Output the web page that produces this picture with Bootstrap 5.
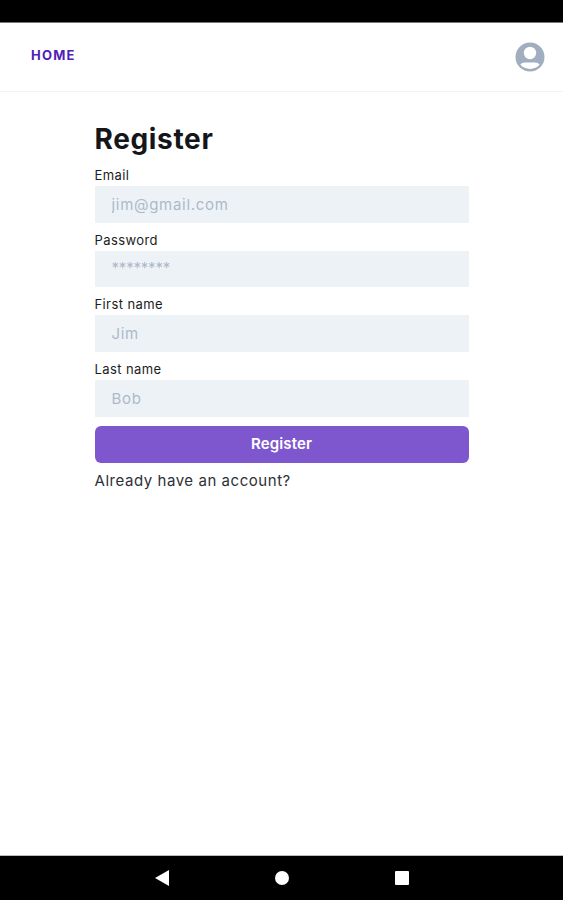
<!DOCTYPE html>
<html lang="en">
<head>
  <meta charset="UTF-8" />
  <meta name="viewport" content="width=device-width, initial-scale=1.0"/>
  <title>Register</title>
  <link href="https://cdn.jsdelivr.net/npm/bootstrap@5.3.0/dist/css/bootstrap.min.css" rel="stylesheet"/>
  <style>
    body {
      background: #fff;
      font-family: Inter, "Liberation Sans", sans-serif;
      height: 900px;
      overflow: hidden;
    }
    .status-strip { background: #000; border-bottom: 1px solid #777; height: 23px; }
    .top-bar { height: 69px; border-bottom: 1px solid #f1f3f5; padding: 0 18px 0 31px; }
    .home-link { color: #5021b8; font-size: 13px; font-weight: 700; text-decoration: none; letter-spacing: 1.2px; margin-bottom: 3px; }
    .page-main { height: 763px; }
    .reg-form { width: 374px; margin: 0 auto; padding-top: 28px; }
    .reg-title { font-size: 28px; font-weight: 700; color: #14161a; line-height: 38px; letter-spacing: .65px; margin: 0 0 8px; }
    .reg-label { display: block; font-size: 13px; color: #1a1d21; line-height: 18px; letter-spacing: .4px; margin: 0 0 2px; }
    .reg-input, .reg-input:focus {
      display: block;
      width: 100%;
      height: 36.7px;
      border: 0;
      border-radius: 0;
      background: #edf2f7;
      box-shadow: none;
      padding: 0 17px;
      font-size: 15px;
      letter-spacing: .7px;
      margin-bottom: 8px;
    }
    .reg-input::placeholder { color: #adb9c9; opacity: 1; }
    .reg-input.pw-input { letter-spacing: -.2px; padding-bottom: 4px; }
    .reg-btn, .reg-btn:hover {
      background: #7e57cf;
      border: 0;
      border-radius: 6px;
      color: #fff;
      font-size: 15px;
      font-weight: 600;
      letter-spacing: .15px;
      height: 37px;
      padding: 0;
      margin-top: 1px;
    }
    .reg-note { font-size: 15px; color: #2d3036; line-height: 20px; letter-spacing: .55px; margin: 8px 0 0; }
    .nav-strip { height: 45px; background: #000; border-top: 1px solid #bbb; }
    .nav-cell { width: 120px; }
  </style>
</head>
<body>
  <div class="status-strip"></div>

  <nav class="top-bar d-flex align-items-center justify-content-between">
    <a href="#" class="home-link">HOME</a>
    <svg width="30" height="30" viewBox="0 0 30 30" aria-label="Account">
      <circle cx="15" cy="15" r="14.5" fill="#a0aec0"/>
      <circle cx="15" cy="11" r="6.2" fill="#fff"/>
      <path d="M5.4 22.8c1-1.6 2.6-2.3 4.6-2.3h10c2 0 3.6.7 4.6 2.3-2.2 2.6-5.8 4.1-9.6 4.1s-7.4-1.5-9.6-4.1z" fill="#fff"/>
    </svg>
  </nav>

  <main class="page-main">
    <form class="reg-form">
      <h1 class="reg-title">Register</h1>
      <label class="reg-label" for="email">Email</label>
      <input class="reg-input form-control" id="email" placeholder="jim@gmail.com">
      <label class="reg-label" for="password">Password</label>
      <input class="reg-input pw-input form-control" id="password" placeholder="********">
      <label class="reg-label" for="first">First name</label>
      <input class="reg-input form-control" id="first" placeholder="Jim">
      <label class="reg-label" for="last">Last name</label>
      <input class="reg-input form-control" id="last" placeholder="Bob">
      <button type="button" class="btn reg-btn w-100">Register</button>
      <p class="reg-note">Already have an account?</p>
    </form>
  </main>

  <div class="nav-strip d-flex align-items-center justify-content-center">
    <div class="nav-cell d-flex justify-content-center">
      <svg width="14" height="16" viewBox="0 0 14 16"><path d="M14 0v16L0 8z" fill="#fff"/></svg>
    </div>
    <div class="nav-cell d-flex justify-content-center">
      <svg width="14" height="14" viewBox="0 0 14 14"><circle cx="7" cy="7" r="7" fill="#fff"/></svg>
    </div>
    <div class="nav-cell d-flex justify-content-center">
      <svg width="14" height="14" viewBox="0 0 14 14"><rect width="14" height="14" rx="1" fill="#fff"/></svg>
    </div>
  </div>
</body>
</html>
